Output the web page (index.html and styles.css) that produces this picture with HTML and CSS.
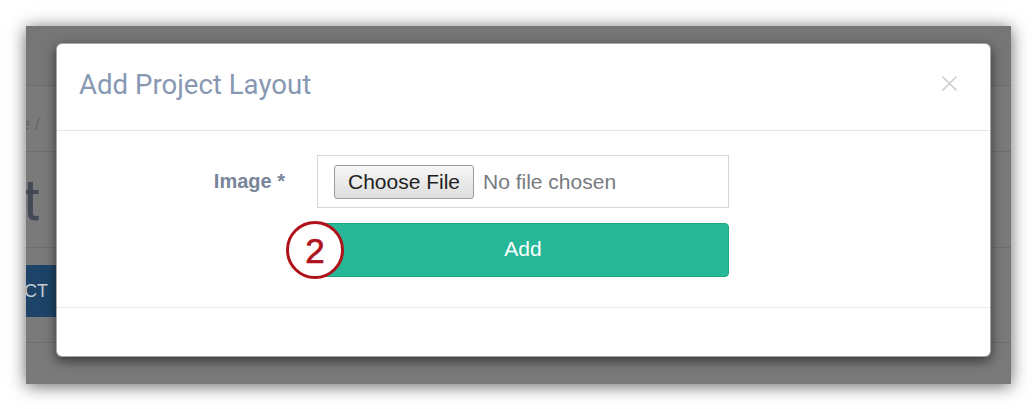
FILE: index.html
```html
<!DOCTYPE html>
<html lang="en">
<head>
<meta charset="utf-8">
<title>Add Project Layout</title>
<link rel="stylesheet" href="styles.css">
</head>
<body>
<div class="shot">
  <div class="page">
    <div class="topbar"></div>
    <div class="crumbs"><span class="crumb-text">Home /</span></div>
    <div class="heading"><span class="heading-text">t</span><span class="heading-mark"></span></div>
    <div class="toolbar"><div class="btn-dark">PROJECT</div></div>
  </div>
  <div class="modal">
    <div class="modal-header">
      <h4 class="modal-title">Add Project Layout</h4>
      <svg class="close" width="15" height="15" viewBox="0 0 15 15" aria-label="Close">
        <path d="M1 1 L14 14 M14 1 L1 14" stroke="#cccccc" stroke-width="1.6" fill="none" stroke-linecap="round"/>
      </svg>
    </div>
    <div class="modal-body">
      <form class="form-grid">
        <label class="form-label">Image *</label>
        <div class="file-box"><span class="file-btn">Choose File</span><span class="file-name">No file chosen</span></div>
        <div class="submit-wrap">
          <button type="button" class="btn-add">Add</button>
          <span class="badge">2</span>
        </div>
      </form>
    </div>
    <div class="modal-footer"></div>
  </div>
</div>
</body>
</html>
```

FILE: styles.css
```css
* { box-sizing: border-box; }

html, body {
  margin: 0;
  padding: 0;
  background: #ffffff;
}

body {
  width: 1036px;
  height: 409px;
  overflow: hidden;
  font-family: "Liberation Sans", Arial, sans-serif;
}

.shot {
  position: relative;
  margin: 26px 0 0 26px;
  width: 985px;
  height: 358px;
  overflow: hidden;
  background: #7a7a7a;
  box-shadow: 0 2px 16px rgba(0, 0, 0, 0.6);
}

/* dimmed page behind the modal */
.page {
  display: flex;
  flex-direction: column;
}

.topbar {
  height: 60px;
  background: #767676;
  border-bottom: 1px solid #6c6c6c;
}

.crumbs {
  height: 66px;
  border-bottom: 1px solid #6e6e6e;
  display: flex;
  align-items: center;
  padding-top: 12px;
  font-size: 18px;
  color: #62666c;
  white-space: nowrap;
}

.crumb-text {
  text-indent: -44px;
  display: block;
}

.heading {
  height: 96px;
  border-bottom: 1px solid #6e6e6e;
  display: flex;
  align-items: flex-start;
  padding-top: 16px;
}

.heading-text {
  font-family: Roboto, "Liberation Sans", sans-serif;
  font-weight: 400;
  font-size: 57px;
  line-height: 66px;
  color: #434a56;
  margin-left: -4px;
}

.heading-mark {
  width: 8px;
  height: 24px;
  margin: 26px 0 0 19px;
  background: #6a4646;
}

.toolbar {
  height: 95px;
  border-bottom: 1px solid #6e6e6e;
  padding-top: 17px;
}

.btn-dark {
  width: 160px;
  height: 52px;
  background: #1d4468;
  color: #c4ccd4;
  font-size: 18px;
  line-height: 52px;
  white-space: nowrap;
  text-indent: -62px;
  overflow: hidden;
}

/* modal */
.modal {
  position: absolute;
  left: 30px;
  top: 17px;
  width: 935px;
  background: #ffffff;
  border: 1px solid rgba(0, 0, 0, 0.35);
  border-radius: 6px;
  box-shadow: 0 4px 12px rgba(0, 0, 0, 0.55);
}

.modal-header {
  display: flex;
  align-items: flex-start;
  height: 87px;
  padding: 25px 23px 0 22px;
  border-bottom: 1px solid #e5e5e5;
}

.modal-title {
  margin: 0;
  font-family: Roboto, "Liberation Sans", sans-serif;
  font-weight: 400;
  font-size: 27.6px;
  line-height: 32px;
  color: #8798b3;
}

.close {
  margin-left: auto;
  margin-top: 7px;
  margin-right: 10px;
}

.modal-body {
  padding: 24px 0 30px 0;
  border-bottom: 1px solid #e8e8e8;
}

.form-grid {
  margin: 0;
  display: grid;
  grid-template-columns: 228px 412px;
  column-gap: 32px;
  row-gap: 15px;
}

.form-label {
  align-self: center;
  text-align: right;
  font-weight: 700;
  font-size: 20px;
  color: #76859a;
}

.file-box {
  height: 53px;
  border: 1px solid #d6d6d6;
  display: flex;
  align-items: center;
  padding-left: 16px;
}

.file-btn {
  height: 34px;
  width: 140px;
  display: flex;
  align-items: center;
  justify-content: center;
  font-size: 21px;
  color: #1e1e1e;
  border: 1px solid #9c9c9c;
  border-radius: 3px;
  background: linear-gradient(#f6f6f6, #dedede);
}

.file-name {
  margin-left: 9px;
  font-size: 21px;
  color: #777b80;
}

.submit-wrap {
  grid-column: 2;
  position: relative;
}

.btn-add {
  display: block;
  width: 100%;
  height: 54px;
  margin: 0;
  padding: 0 0 2px 0;
  background: #27b898;
  border: 1px solid #20a586;
  border-radius: 4px;
  color: #ffffff;
  font-family: "Liberation Sans", Arial, sans-serif;
  font-size: 21px;
}

.badge {
  position: absolute;
  left: -31px;
  top: -2px;
  width: 58px;
  height: 58px;
  border: 3.5px solid #b0121b;
  border-radius: 50%;
  background: #ffffff;
  color: #b0121b;
  font-size: 35px;
  -webkit-text-stroke: 0.7px #b0121b;
  display: flex;
  align-items: center;
  justify-content: center;
  line-height: 1;
}

.modal-footer {
  height: 48px;
}
```
